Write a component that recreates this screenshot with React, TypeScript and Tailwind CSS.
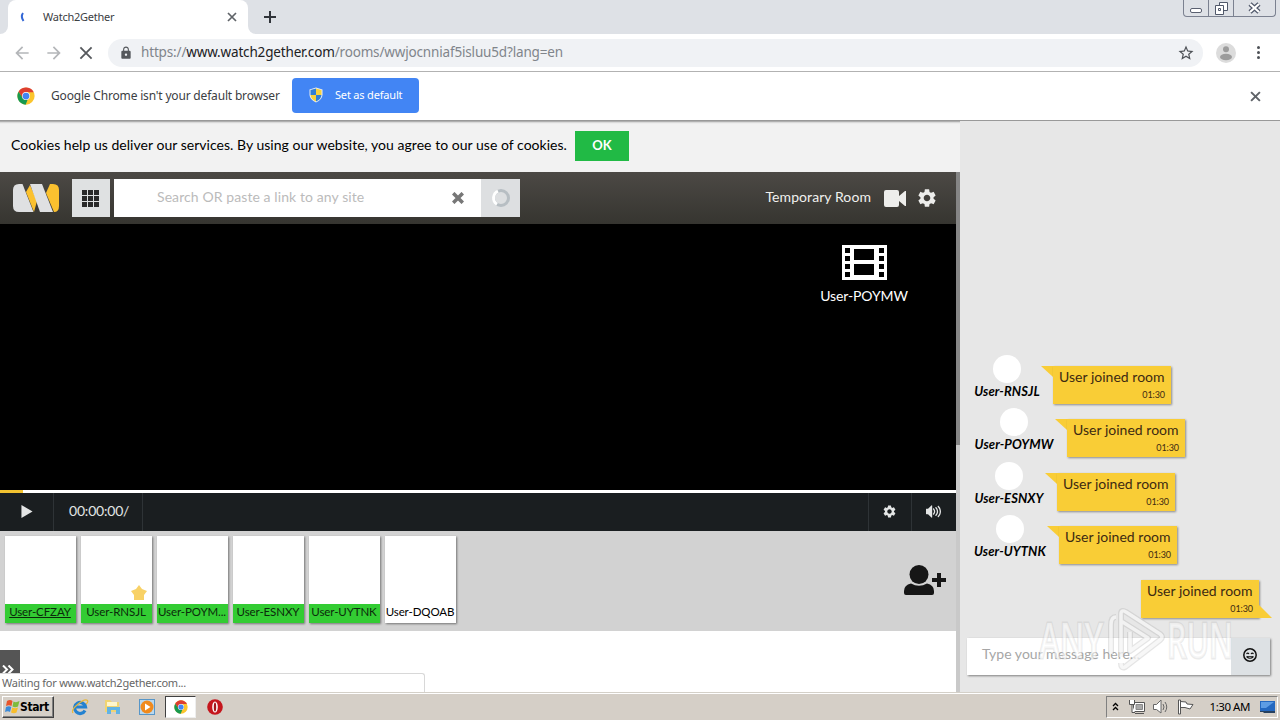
import React from "react";
import { MdSettings, MdLock, MdStarBorder, MdArrowBack, MdArrowForward } from "react-icons/md";
import { ImVolumeHigh } from "react-icons/im";

const users = [
  { name: "User-CFZAY", active: true, me: true },
  { name: "User-RNSJL", active: true, star: true },
  { name: "User-POYM...", active: true },
  { name: "User-ESNXY", active: true },
  { name: "User-UYTNK", active: true },
  { name: "User-DQOAB", active: false },
];

const messages = [
  { name: "User-RNSJL", width: "w-[66px]" },
  { name: "User-POYMW", width: "w-[80px]" },
  { name: "User-ESNXY", width: "w-[70px]" },
  { name: "User-UYTNK", width: "w-[72px]" },
];

const Cross = ({ size, stroke, color }: { size: number; stroke: number; color: string }) => (
  <svg width={size} height={size} viewBox="0 0 10 10" fill="none" stroke={color} strokeWidth={stroke}>
    <path d="M1 1L9 9M9 1L1 9" />
  </svg>
);

const ChromeLogo = ({ size }: { size: number }) => (
  <svg width={size} height={size} viewBox="0 0 48 48">
    <circle cx="24" cy="24" r="23" fill="#fbc52d" />
    <path d="M4.1 12.5A23 23 0 0 1 43.9 12.5L44.5 14H24L15 29Z" fill="#dd3e31" />
    <path d="M4.1 12.5L15.3 29C18 34 24 35 28.5 33.5L23 47A23 23 0 0 1 4.1 12.5Z" fill="#17994f" />
    <circle cx="24" cy="24" r="10.5" fill="#fff" />
    <circle cx="24" cy="24" r="9" fill="#4285f4" />
  </svg>
);

const Shield = () => (
  <svg width="14" height="16" viewBox="0 0 14 16">
    <path d="M7 0.5L13.5 2.5V8Q13 13 7 15.5Q1 13 0.5 8V2.5Z" fill="#e9edf2" />
    <path d="M7 1.5V8H1.5V3Z" fill="#2f7fd6" />
    <path d="M7 1.5V8H12.5V3Z" fill="#f7d23c" />
    <path d="M7 8H1.5Q2 12.5 7 14.5Z" fill="#f7d23c" />
    <path d="M7 8H12.5Q12 12.5 7 14.5Z" fill="#2f7fd6" />
  </svg>
);

const TabStrip = () => (
  <div className="h-[34px] shrink-0 bg-[#dee1e6] flex items-start">
    <div className="w-2 h-[34px] bg-white">
      <div className="h-full rounded-br-lg bg-[#dee1e6]" />
    </div>
    <div className="w-60 h-[34px] bg-white rounded-t-lg flex items-center pl-[10px]">
      <svg width="12" height="12" viewBox="0 0 12 12" fill="none">
        <path d="M5 2Q2.500 5.500 5.500 10" stroke="#3367d6" strokeWidth="2" />
      </svg>
      <span className="ml-[13px] text-[11px] tracking-[-0.25px] text-[#3c4043] flex-1">Watch2Gether</span>
      <span className="mr-[11px]"><Cross size={10} stroke={1.7} color="#5f6368" /></span>
    </div>
    <div className="w-2 h-[34px] bg-white">
      <div className="h-full rounded-bl-lg bg-[#dee1e6]" />
    </div>
    <svg className="mt-[11px] ml-2" width="12" height="12" viewBox="0 0 12 12" stroke="#30343a" strokeWidth="2">
      <path d="M6 0V12M0 6H12" />
    </svg>
    <div className="ml-auto mr-[4px] h-[17px] w-[93px] flex border border-t-0 border-[#7b8190] rounded-b-[4px]">
      <div className="w-[25px] border-r border-[#7b8190] flex justify-center pt-[8px]">
        <div className="w-3 h-[5px] border border-[#5a6070] bg-white rounded-[2px]" />
      </div>
      <div className="w-[25px] border-r border-[#7b8190] flex justify-center pt-[2px]">
        <svg width="13" height="13" viewBox="0 0 13 13" fill="#fff" stroke="#50586a">
          <path d="M4.500 .5H12.500V8.500H4.500Z" />
          <path d="M.5 3.500H8.500V12.500H.5Z" />
          <path d="M3.500 6.500H5.500V8.500H3.500Z" />
        </svg>
      </div>
      <div className="flex-1 flex justify-center pt-[2px]">
        <svg width="13" height="12" viewBox="0 0 13 12" fill="none">
          <path d="M2 2L11 10M11 2L2 10" stroke="#50586a" strokeWidth="4.500" />
          <path d="M2 2L11 10M11 2L2 10" stroke="#fff" strokeWidth="2.200" />
        </svg>
      </div>
    </div>
  </div>
);

const Toolbar = () => (
  <div className="h-[38px] shrink-0 bg-white border-b border-[#b2b2b2] flex items-center">
    <MdArrowBack className="ml-3 text-[#b4b6b9]" size={20} />
    <MdArrowForward className="ml-3 text-[#b4b6b9]" size={20} />
    <span className="ml-[15px]"><Cross size={14} stroke={1.3} color="#55585c" /></span>
    <div className="ml-[15px] w-[1095px] h-7 rounded-full bg-[#f0f2f5] flex items-center pl-[11px]">
      <MdLock size={14} className="text-[#55585c]" />
      <span className="ml-[8px] pb-[2px] text-[13.5px] leading-5 tracking-[-0.16px] text-[#80858b] flex-1">
        https://<span className="text-[#202124]">www.watch2gether.com</span>/rooms/wwjocnniaf5isluu5d?lang=en
      </span>
      <MdStarBorder size={18} className="mr-[8px] text-[#4d5156]" />
    </div>
    <svg className="ml-[13px]" width="20" height="20" viewBox="0 0 20 20">
      <circle cx="10" cy="10" r="10" fill="#dcdcdc" />
      <circle cx="10" cy="6.300" r="3" fill="#9c9c9c" />
      <ellipse cx="10" cy="14" rx="6" ry="3.300" fill="#9c9c9c" />
    </svg>
    <div className="ml-[21px] flex flex-col gap-[2px]">
      <i className="size-[3px] rounded-full bg-[#4d5156]" />
      <i className="size-[3px] rounded-full bg-[#4d5156]" />
      <i className="size-[3px] rounded-full bg-[#4d5156]" />
    </div>
  </div>
);

const InfoBar = () => (
  <div className="h-[49px] shrink-0 bg-white border-b border-[#999] flex items-center pl-[17px]">
    <ChromeLogo size={18} />
    <span className="ml-4 w-[241px] text-[12px] tracking-[-0.18px] text-[#3c4043]">Google Chrome isn't your default browser</span>
    <div className="w-[127px] h-[35px] mb-[2px] rounded-[4px] bg-[#4285f4] text-white text-[11px] tracking-[-0.18px] flex items-center pl-[17px]">
      <Shield />
      <span className="ml-[12px]">Set as default</span>
    </div>
    <span className="ml-auto mr-[19px]"><Cross size={11} stroke={1.8} color="#5f6368" /></span>
  </div>
);

const Logo = () => (
  <svg width="46" height="29" viewBox="0 0 46 29">
    <path d="M6 0H9.500L20.500 28H6Q0 28 0 22V6Q0 0 6 0Z" fill="#dfe0e2" />
    <path d="M17 1L13 8L21 28L24 17Z" fill="#fbc12f" />
    <path d="M17 0H29L40 28H27Z" fill="#dfe0e2" />
    <path d="M37 0H40Q46 0 46 6V22Q46 28 41 28L33 9Z" fill="#fbc12f" />
  </svg>
);

const RoomHeader = () => (
  <div className="h-[52px] bg-linear-to-b from-[#4c4945] to-[#363530] flex items-center pl-[13px]">
    <Logo />
    <div className="ml-[13px] w-[38px] h-[38px] bg-[#dfe1e2] flex items-center pl-[10px]">
      <div className="grid grid-cols-3 gap-[1px]">
        {Array.from({ length: 9 }, (_, i) => (
          <i key={i} className="size-[5px] bg-[#2a2a2a]" />
        ))}
      </div>
    </div>
    <div className="ml-1 w-[367px] h-[38px] bg-white flex items-center pl-[43px] text-[14px] tracking-[0.09px] text-[#bbb]">
      <span className="flex-1 pb-[3px]">Search OR paste a link to any site</span>
      <span className="mr-[17px]"><Cross size={12} stroke={3} color="#777" /></span>
    </div>
    <div className="w-[39px] h-[38px] bg-[#dddfe1] flex items-center justify-center">
      <svg width="20" height="20" viewBox="0 0 20 20" fill="none" strokeWidth="3">
        <circle cx="10" cy="10" r="7.500" stroke="#b7bec3" />
        <path d="M6 16.300A7.500 7.500 0 0 1 7 3.100" stroke="#fff" />
      </svg>
    </div>
    <span className="ml-auto text-[14px] pb-[4px] tracking-[0.08px] text-[#f0f0ee]">Temporary Room</span>
    <svg className="ml-[13px]" width="22" height="17" viewBox="0 0 22 17" fill="#ededeb">
      <path d="M2 0H13Q15 0 15 2V6L21 1H22V16H21L15 11V15Q15 17 13 17H2Q0 17 0 15V2Q0 0 2 0Z" />
    </svg>
    <MdSettings className="ml-[10px] mr-[18px] text-[#ededeb]" size={22} />
  </div>
);

const Film = () => (
  <svg width="46" height="35" viewBox="0 0 46 35">
    <path d="M1 0H46V35H1Z" fill="#fff" />
    <g fill="#000">
      <path d="M13 4H33V15H13ZM13 19H33V30H13Z" />
      {[3, 11, 19, 27].map((y) => (
        <g key={y}>
          <rect x="4" y={y} width="5" height="5" />
          <rect x="38" y={y} width="5" height="5" />
        </g>
      ))}
    </g>
  </svg>
);

const Player = () => (
  <>
    <div className="h-[266px] bg-black flex justify-end">
      <div className="mt-[21px] mr-[48px] w-[88px] flex flex-col items-center text-white text-[14px]">
        <Film />
        <span className="mt-[6px] leading-5 tracking-[-0.1px]">User-POYMW</span>
      </div>
    </div>
    <div className="h-[3px] bg-white">
      <div className="h-full w-[23px] bg-[#f2c230]" />
    </div>
    <div className="h-[38px] bg-[#1a1e20] flex items-stretch text-[#e3e5e5]">
      <div className="w-[54px] border-r border-[#2e3336] flex items-center pl-[21px] pb-[2px]">
        <svg width="12" height="13" viewBox="0 0 12 14" fill="currentColor"><path d="M0 0L12 7L0 14Z" /></svg>
      </div>
      <div className="w-[89px] border-r border-[#2e3336] flex items-center pl-[15px] pb-[4px] text-[14px] tracking-[-0.2px]">00:00:00/</div>
      <div className="ml-auto w-[43px] border-l border-[#2e3336] flex items-center justify-center pr-[2px] pb-[2px]">
        <MdSettings size={15} />
      </div>
      <div className="w-[45px] border-l border-[#2e3336] flex items-center justify-center pr-[1px] pb-[2px]">
        <ImVolumeHigh size={15} />
      </div>
    </div>
  </>
);

const UserRow = () => (
  <div className="h-[100px] bg-[#d2d2d2] flex items-start pt-[5px] pl-[5px] gap-[5px]">
    {users.map((u) => (
      <div key={u.name} className="w-[71px] h-[87px] bg-white flex flex-col justify-end shadow-[1px_1px_2px_0_rgba(0,0,0,0.45)]">
        {u.star && (
          <svg className="self-end mr-[5px] mb-[3px]" width="16" height="16" viewBox="0 0 16 16" fill="#f8d166">
            <path d="M8 0L11 4L16 6L13 10V15L8 15L3 15V10L0 6L5 4Z" />
          </svg>
        )}
        <div className={`h-[19px] pr-[1px] text-[11.5px] leading-[16px] tracking-[-0.1px] text-center whitespace-nowrap ${u.active ? "bg-[#33cc33] text-[#0b2a0b]" : "text-black"} ${u.me ? "underline" : ""}`}>
          {u.name}
        </div>
      </div>
    ))}
    <svg className="ml-auto mr-[10px] mt-[29px]" width="42" height="31" viewBox="0 0 42 31" fill="#161616">
      <circle cx="15" cy="9.500" r="9.500" />
      <path d="M7 18.500Q15 23 23 18.500Q30 20 30 26V28Q30 30 28 30H2Q0 30 0 28V26Q0 20 7 18.500Z" />
      <path d="M33 8H37V13H42V17H37V22H33V17H28V13H33Z" />
    </svg>
  </div>
);

const Bubble = ({ mine }: { mine?: boolean }) => (
  <div className="flex">
    {!mine && (
      <svg width="12" height="12" viewBox="0 0 12 12"><path d="M0 0H12V11Z" fill="#f9cd36" /></svg>
    )}
    <div className="w-[118px] h-[38px] bg-[#f9cd36] shadow-[1px_1px_2px_rgba(0,0,0,0.4)] px-[6px] flex flex-col text-[#3d2a12]">
      <span className="text-[14px] leading-[22px] tracking-[0.02px]">User joined room</span>
      <span className="self-end text-[9px] leading-[14px] tracking-[-0.1px]">01:30</span>
    </div>
    {mine && (
      <svg className="self-end" width="13" height="13" viewBox="0 0 13 13"><path d="M0 0L13 13H0Z" fill="#f9cd36" /></svg>
    )}
  </div>
);

const Smile = () => (
  <svg width="14" height="14" viewBox="0 0 14 14" fill="none" stroke="#111" strokeWidth="1.5">
    <circle cx="7" cy="7" r="6.200" />
    <path d="M3.500 6Q4.700 4.300 6 6M8 6Q9.300 4.300 10.500 6M3.500 8.500Q7 12 10.500 8.500" strokeWidth="1.1" />
    <path d="M4 8.500H10" strokeWidth="0.8" />
  </svg>
);

const Watermark = () => (
  <svg className="pointer-events-none overflow-visible absolute left-[70px] bottom-[14px]" width="210" height="90" viewBox="0 0 210 90">
    <g fill="#fff" fillOpacity="0.55" stroke="#a8a8a8" strokeOpacity="0.22" strokeWidth="3" paintOrder="stroke" fontFamily="'Open Sans', sans-serif" fontSize="49" fontWeight="600">
      <text x="9" y="70" textLength="64" lengthAdjust="spacingAndGlyphs">ANY</text>
      <text x="137" y="70" textLength="66" lengthAdjust="spacingAndGlyphs">RUN</text>
    </g>
    <g fill="none" strokeLinejoin="round" transform="translate(0 17)">
      <path d="M86 12Q81 12 81 20V49M91 52V9Q91 4 96 7L130 29Q134 32 130 35L95 62Q91 64 91 58M91 16L118 33L100 46V27" stroke="#aaa" strokeOpacity="0.3" strokeWidth="6" />
      <path d="M86 12Q81 12 81 20V49M91 52V9Q91 4 96 7L130 29Q134 32 130 35L95 62Q91 64 91 58M91 16L118 33L100 46V27" stroke="#fff" strokeOpacity="0.7" strokeWidth="3.500" />
    </g>
  </svg>
);

const Chat = () => (
  <div className="relative w-[320px] h-full bg-[#e7e7e7] flex flex-col justify-end">
    {messages.map((m) => (
      <div key={m.name} className="h-[53.6px] pl-[14px] flex">
        <div className={`${m.width} flex flex-col items-center`}>
          <div className="size-7 rounded-full bg-white shrink-0" />
          <span className="text-[13px] leading-[17px] font-bold italic tracking-[0.08px]">{m.name}</span>
        </div>
        <div className="mt-[11px] ml-[1px]"><Bubble /></div>
      </div>
    ))}
    <div className="mt-[11px] mr-2 flex justify-end"><Bubble mine /></div>
    <div className="mt-5 mb-[17px] ml-[7px] w-[303px] h-[37px] flex shadow-[1px_1px_2px_rgba(0,0,0,0.45)]">
      <div className="w-[264px] bg-white pl-[15px] text-[14px] leading-[32px] tracking-[0.02px] text-[#a6a6a6]">Type your message here...</div>
      <div className="flex-1 bg-[#dde1e4] flex items-center justify-center pr-[2px] pb-[3px]"><Smile /></div>
    </div>
    <Watermark />
  </div>
);

const TrayIcons = () => (
  <>
    <svg className="ml-[5px]" width="7" height="9" viewBox="0 0 7 9" fill="none" stroke="#000" strokeWidth="1.3">
      <path d="M1 4L3.500 1.500L6 4M1 8L3.500 5.500L6 8" />
    </svg>
    <svg className="ml-[10px]" width="16" height="16" viewBox="0 0 16 16" stroke="#555" fill="#fff">
      <path d="M4.500 3.500H15.500V12.500H4.500Z" />
      <path d="M7 5.500H13.500V10.500H7Z" fill="#aaa" stroke="#888" />
      <path d="M6 14.500H15M.5 1V5.500H5.500V1M3 5.500V13.500H6" />
    </svg>
    <svg className="ml-2" width="17" height="16" viewBox="0 0 17 16" stroke="#666" fill="#fff">
      <path d="M.5 5.500H3.500L8 1V14L3.500 10.500H.5Z" />
      <path d="M10 5Q12 8 10 11M12 3Q15.500 8 12 13" fill="none" />
    </svg>
    <svg className="ml-[7px]" width="17" height="16" viewBox="0 0 17 16" stroke="#555" fill="#fff">
      <path d="M3.500 2.500L9 3L10 5L16 5.500L13 10L8 8.500H3.500Z" />
      <path d="M1.500 1V15H3.500V1Z" />
    </svg>
  </>
);

const Taskbar = () => (
  <div className="h-7 shrink-0 bg-[#d5cfc7] border-t border-[#d4d0c8] shadow-[inset_0_1px_0_#fff] flex items-center pl-[2px] pr-[2px]">
    <div className="w-[52px] h-[22px] border border-t-white border-l-white border-r-[#404040] border-b-[#404040] shadow-[inset_-1px_-1px_0_#808080] flex items-center pl-[2px]">
      <svg width="15" height="15" viewBox="0 0 15 15">
        <path d="M2 2Q5 0 7.500 2L6.500 7Q4 5.500 1 7Z" fill="#e8542a" />
        <path d="M8.500 2.500Q11 4 14.500 2L13 7.500Q10 9 7.500 7.500Z" fill="#7dbb3c" />
        <path d="M1 8Q4 6.500 6.300 8L5 13Q3 11.500 0 13Z" fill="#3b8ad8" />
        <path d="M7.300 8.500Q10 10 13 8.500L11.500 13.500Q9 15 6 13.500Z" fill="#f8bd2b" />
      </svg>
      <span className="text-[12px] font-bold text-black tracking-[-0.4px] font-['DejaVu_Sans_Condensed','DejaVu_Sans',sans-serif]">Start</span>
    </div>
    <svg className="ml-[17px]" width="18" height="18" viewBox="0 0 18 18" fill="none">
      <path d="M14 12.500A5.500 5.500 0 1 1 14.500 9H5" stroke="#2482d0" strokeWidth="3.200" />
      <path d="M2 15Q0 12 6 7Q14 0 16.500 2.500Q17.500 4 15 6" stroke="#e8b83a" strokeWidth="1.200" />
    </svg>
    <svg className="ml-[15px]" width="17" height="17" viewBox="0 0 17 17">
      <path d="M1 2H6L8 4H15V14H1Z" fill="#f0d472" />
      <path d="M3 4H13V8H3Z" fill="#fff6cc" />
      <path d="M3 9H16V16H12V12H7V16H3Z" fill="#62b3e4" />
    </svg>
    <svg className="ml-[18px]" width="16" height="16" viewBox="0 0 16 16">
      <rect x=".5" y=".5" width="15" height="15" fill="#b9d8ef" stroke="#5796c8" />
      <circle cx="8" cy="8" r="6.500" fill="#f08a1d" />
      <path d="M6 4.500L11.500 8L6 11.500Z" fill="#fff" />
    </svg>
    <div className="ml-[10px] w-[31px] h-[22px] bg-white border border-t-[#404040] border-l-[#404040] border-[#eee] flex items-center justify-center">
      <ChromeLogo size={14} />
    </div>
    <svg className="ml-[11px]" width="16" height="16" viewBox="0 0 16 16">
      <circle cx="8" cy="8" r="7.800" fill="#c5161d" />
      <ellipse cx="8" cy="8" rx="2.800" ry="5.500" fill="#fff" />
      <ellipse cx="8" cy="8" rx="1.200" ry="4.500" fill="#a3161a" />
    </svg>
    <div className="ml-auto w-[172px] h-[22px] border border-t-[#808080] border-l-[#808080] border-r-white border-b-white flex items-center">
      <TrayIcons />
      <span className="ml-auto mr-[10px] text-[11.5px] tracking-[-0.45px] text-black">1:30 AM</span>
      <svg className="mr-[2px]" width="15" height="14" viewBox="0 0 15 14">
        <rect y="1" width="15" height="10" fill="#2468c0" />
        <path d="M1 2H14L6 8H1Z" fill="#5d9ce4" />
        <path d="M0 11H15V13H4L3 12H0Z" fill="#26405f" />
      </svg>
    </div>
  </div>
);

export default function App() {
  return (
    <div className="w-[1280px] h-[720px] overflow-hidden flex flex-col whitespace-nowrap font-['Noto_Sans',sans-serif]">
      <TabStrip />
      <Toolbar />
      <InfoBar />
      <div className="flex-1 min-h-0 flex font-['Lato',sans-serif]">
        <div className="w-[960px] flex flex-col">
          <div className="h-[51px] shrink-0 bg-[#f2f2f2] shadow-[inset_0_3px_2px_-2px_#999] flex items-center pl-[11px]">
            <span className="w-[564px] pb-[4px] text-[14px] tracking-[0.03px] text-black">
              Cookies help us deliver our services. By using our website, you agree to our use of cookies.
            </span>
            <div className="w-[54px] h-[30px] mb-[2px] bg-[#21ba45] text-white text-[13px] font-bold flex items-center justify-center">OK</div>
          </div>
          <div className="flex-1 flex">
            <div className="relative w-[956px] bg-white flex flex-col">
              <RoomHeader />
              <Player />
              <UserRow />
              <div className="mt-[19px] w-5 flex-1 bg-[#555] text-white flex justify-center pt-[15px] pr-[4px]">
                <svg width="12" height="9" viewBox="0 0 12 9" fill="none" stroke="#fff" strokeWidth="2">
                  <path d="M1 .5L5 4.500L1 8.500M6.500 .5L10.500 4.500L6.500 8.500" />
                </svg>
              </div>
              <div className="absolute left-0 bottom-0 w-[425px] h-[19px] bg-white border-t border-r border-[#d8d8d8] rounded-tr-[3px] pl-[2px] text-[11px] leading-[18px] tracking-[-0.24px] text-[#666] font-['Noto_Sans',sans-serif]">
                Waiting for www.watch2gether.com...
              </div>
            </div>
            <div className="w-1 bg-[#c9c9c9]">
              <div className="h-[273px] bg-[#858585]" />
            </div>
          </div>
        </div>
        <Chat />
      </div>
      <Taskbar />
    </div>
  );
}
